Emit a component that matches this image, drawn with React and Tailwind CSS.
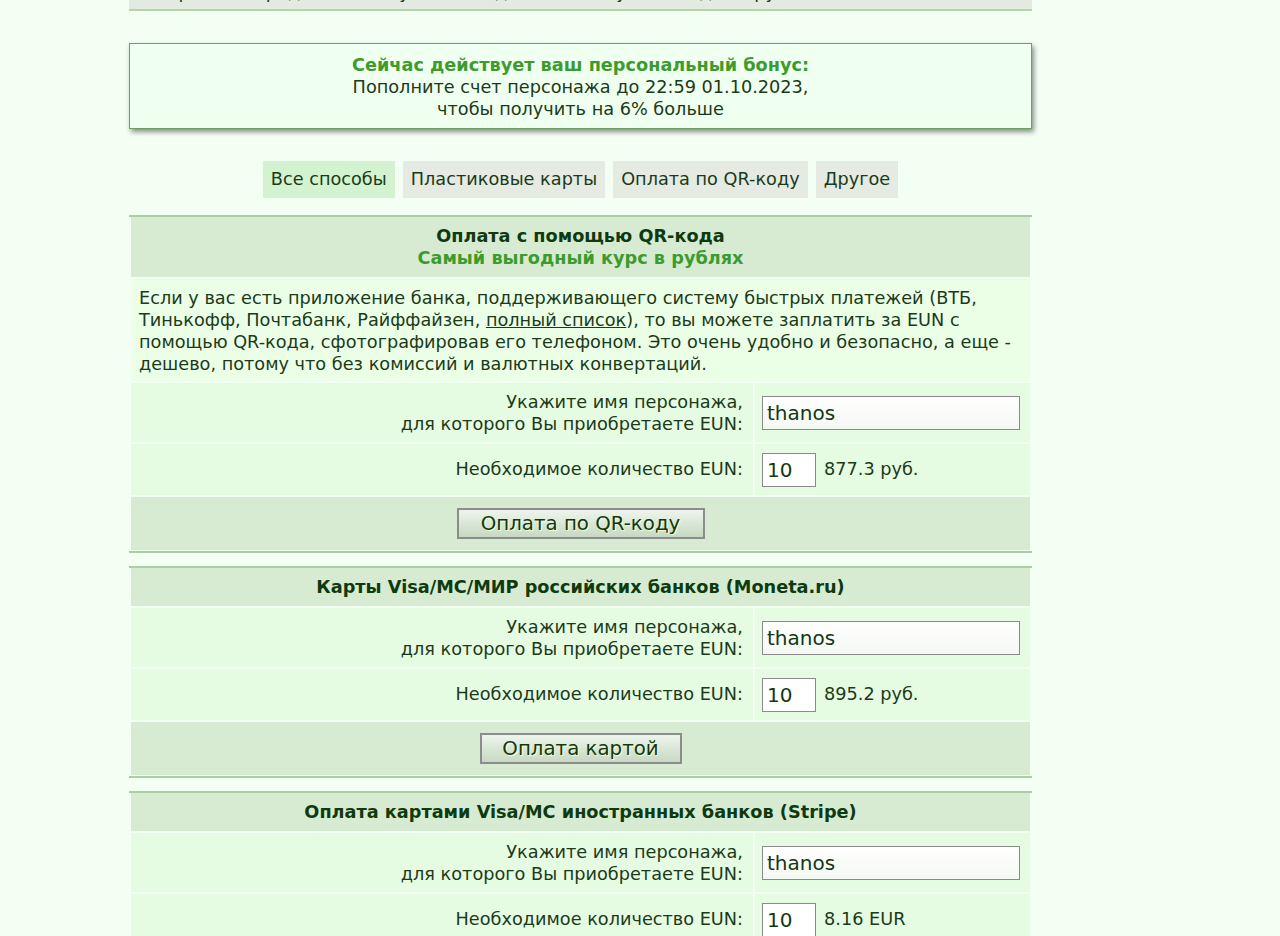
import React from 'react';

const tabs = [
  { label: 'Все способы', active: true },
  { label: 'Пластиковые карты' },
  { label: 'Оплата по QR-коду' },
  { label: 'Другое' },
];

const NameRow = () => (
  <div className="flex gap-[2px]">
    <div className="flex-1 bg-[#e6fce2] pt-[8px] pb-[7px] pr-[10px] text-right leading-[22px]">
      Укажите имя персонажа,
      <br />
      для которого Вы приобретаете EUN:
    </div>
    <div className="w-[275px] bg-[#e6fce2] flex items-center pl-[7px]">
      <input
        defaultValue="thanos"
        className="w-[258px] h-[34px] border border-[#8a8a8a] bg-gradient-to-b from-white to-[#f4f8f3] px-[4px] text-[20px] text-[#123812] outline-none"
      />
    </div>
  </div>
);

const AmountRow = ({ price }) => (
  <div className="flex gap-[2px]">
    <div className="flex-1 bg-[#e6fce2] pr-[10px] flex items-center justify-end">
      Необходимое количество EUN:
    </div>
    <div className="w-[275px] bg-[#e6fce2] flex items-center gap-[8px] pl-[7px] h-[51px]">
      <input
        defaultValue="10"
        className="w-[54px] h-[34px] border border-[#8a8a8a] bg-white px-[4px] text-[20px] text-[#123812] outline-none"
      />
      <span>{price}</span>
    </div>
  </div>
);

const PayButton = ({ children, width }) => (
  <div className="bg-[#d6ebd2] flex justify-center items-center h-[53px]">
    <button
      className={`${width} h-[31px] border-2 border-[#8c8c8c] bg-gradient-to-b from-[#eef5ec] to-[#c6d9c2] text-[19.8px] leading-none text-[#12380f] [text-shadow:1px_1px_0_#f4ffd8]`}
    >
      {children}
    </button>
  </div>
);

const Section = ({ title, subtitle, children }) => (
  <div className="border-t-2 border-b-2 border-[#a9cea2] px-[2px] pb-[1px] flex flex-col gap-[2px]">
    <div className="bg-[#d6ebd2] py-[8px] text-center font-bold leading-[22px]">
      <div className="text-[#0f3a0e]">{title}</div>
      {subtitle && <div className="text-[#3d9b2e]">{subtitle}</div>}
    </div>
    {children}
  </div>
);

export default function App() {
  return (
    <div className="min-h-[936px] bg-[#f4fff3] font-['DejaVu_Sans',Verdana,sans-serif] text-[17.7px] text-[#1b3a19] overflow-hidden">
      <div className="w-[903px] ml-[129px] flex flex-col">
        {/* tail of the block above */}
        <div className="h-[11px] bg-[#e3eadf] overflow-hidden border-b-2 border-[#b4d4ac]">
          <div className="-mt-[19px] px-[10px] leading-[22px] whitespace-nowrap">
            и персонаж продолжит получать ежедневный бонус за вход в игру, пока ваш запас есть
          </div>
        </div>

        {/* bonus */}
        <div className="mt-[32px] border border-[#6e9e62] bg-[#effff0] shadow-[2px_3px_5px_rgba(0,0,0,0.45)] pt-[10px] pb-[8px] text-center leading-[22px]">
          <div className="font-bold text-[#3d9b2e]">Сейчас действует ваш персональный бонус:</div>
          <div>Пополните счет персонажа до 22:59 01.10.2023,</div>
          <div>чтобы получить на 6% больше</div>
        </div>

        {/* payment method filter */}
        <div className="mt-[32px] flex justify-center gap-[8px]">
          {tabs.map((t) => (
            <div
              key={t.label}
              className={`h-[37px] px-[8px] flex items-center ${t.active ? 'bg-[#d3f3d0]' : 'bg-[#e5ebe3]'}`}
            >
              {t.label}
            </div>
          ))}
        </div>

        <div className="mt-[17px] flex flex-col gap-[13px]">
          <Section title="Оплата с помощью QR-кода" subtitle="Самый выгодный курс в рублях">
            <div className="bg-[#ebffe7] px-[8px] pt-[8px] pb-[6px] leading-[22px] whitespace-nowrap">
              Если у вас есть приложение банка, поддерживающего систему быстрых платежей (ВТБ,
              <br />
              Тинькофф, Почтабанк, Райффайзен, <span className="underline">полный список</span>), то вы
              можете заплатить за EUN с
              <br />
              помощью QR-кода, сфотографировав его телефоном. Это очень удобно и безопасно, а еще -
              <br />
              дешево, потому что без комиссий и валютных конвертаций.
            </div>
            <NameRow />
            <AmountRow price="877.3 руб." />
            <PayButton width="w-[248px]">Оплата по QR-коду</PayButton>
          </Section>

          <Section title="Карты Visa/MC/МИР российских банков (Moneta.ru)">
            <NameRow />
            <AmountRow price="895.2 руб." />
            <PayButton width="w-[202px]">Оплата картой</PayButton>
          </Section>

          <Section title="Оплата картами Visa/MC иностранных банков (Stripe)">
            <NameRow />
            <AmountRow price="8.16 EUR" />
            <PayButton width="w-[202px]">Оплата картой</PayButton>
          </Section>
        </div>
      </div>
    </div>
  );
}
